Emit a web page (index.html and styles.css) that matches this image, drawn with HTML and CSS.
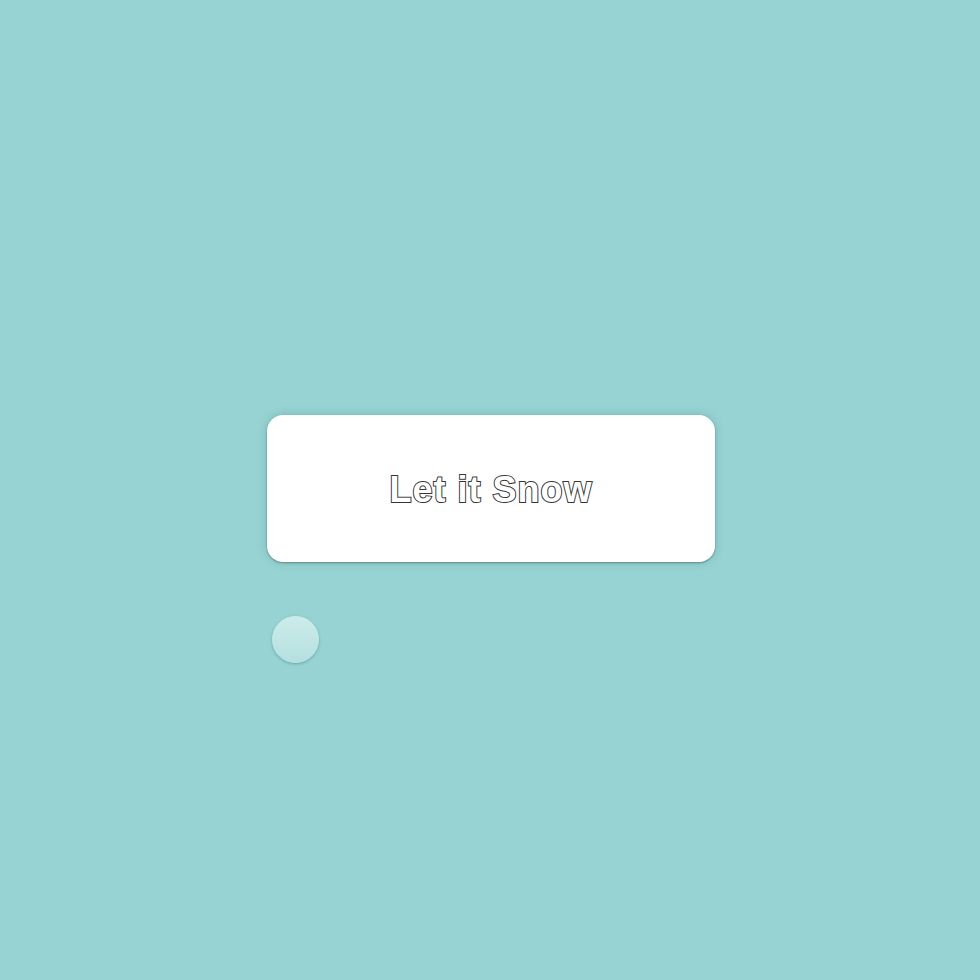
FILE: index.html
```html
<!DOCTYPE html>
<html>
<head>
<meta charset="utf-8">
<link rel="stylesheet" href="styles.css">
</head>
<body>
<main class="stage">
  <div class="card">
    <span class="title">Let it Snow</span>
  </div>
  <div class="ball"></div>
</main>
</body>
</html>
```
FILE: styles.css
```css
html, body {
  margin: 0;
  padding: 0;
  background: #98d3d3;
  height: 100%;
}
.stage {
  width: 448px;
  margin-left: calc(50% - 223px);
  padding-top: 415px;
}
.card {
  height: 147px;
  background: #fff;
  border-radius: 16px;
  display: flex;
  align-items: center;
  justify-content: center;
  box-shadow: 0 1px 2px rgba(0, 0, 0, 0.3), 0 0 10px rgba(40, 120, 120, 0.3);
}
.title {
  font-family: "Liberation Sans", Arial, sans-serif;
  font-weight: bold;
  font-size: 36px;
  letter-spacing: 1px;
  color: #fff;
  -webkit-text-stroke: 2px #333;
  paint-order: stroke fill;
  line-height: 1;
  padding-top: 2px;
  opacity: 0.99;
}
.ball {
  width: 47px;
  height: 47px;
  margin-top: 54px;
  margin-left: 5px;
  border-radius: 50%;
  background: linear-gradient(180deg, #cdeceb 0%, #b4e0df 100%);
  box-shadow: 0 1px 3px rgba(40, 110, 110, 0.45);
}
```
